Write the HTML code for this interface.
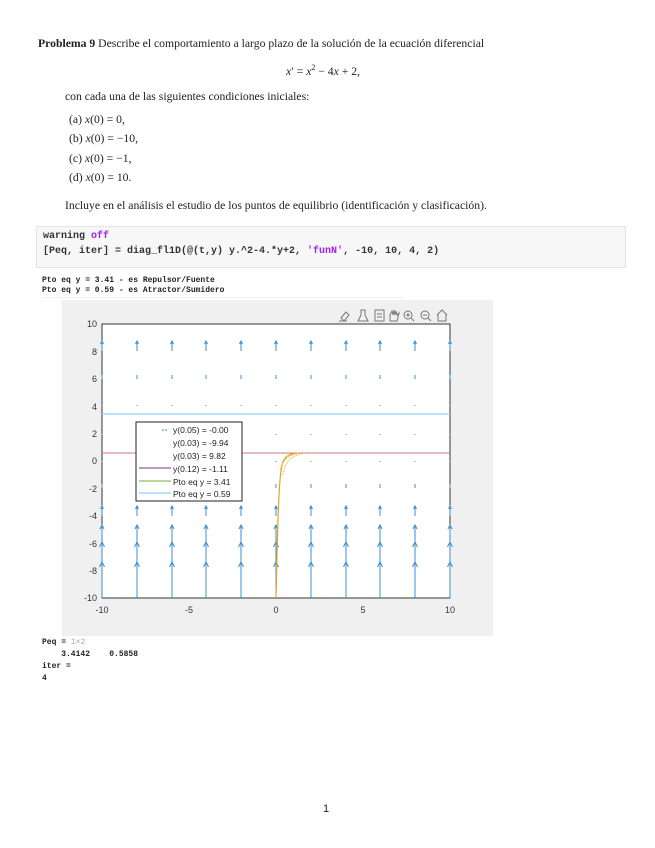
<!DOCTYPE html>
<html><head><meta charset="utf-8"><style>
body{margin:0;background:#fff;width:655px;height:848px;position:relative;font-family:"Liberation Serif",serif;color:#222;overflow:hidden}
.t{position:absolute;white-space:nowrap;font-size:11.7px}
.code{position:absolute;left:36px;top:226px;width:588px;height:40px;background:#f7f7f7;border:1px solid #e3e3e3}
.code div{position:absolute;left:6px;font-family:"Liberation Mono",monospace;font-size:10px;font-weight:bold;color:#333}
.o{position:absolute;font-family:"Liberation Mono",monospace;font-size:8px;font-weight:bold;color:#222;white-space:pre}
</style></head><body>
<div class="t" style="left:38px;top:37px"><b>Problema 9</b> Describe el comportamiento a largo plazo de la solución de la ecuación diferencial</div>
<div class="t" style="left:286px;top:63px"><i>x</i>′ = <i>x</i><sup style="font-size:8px">2</sup> − 4<i>x</i> + 2,</div>
<div class="t" style="left:65px;top:90px">con cada una de las siguientes condiciones iniciales:</div>
<div class="t" style="left:69px;top:113px">(a) <i>x</i>(0) = 0,</div>
<div class="t" style="left:69px;top:132px">(b) <i>x</i>(0) = −10,</div>
<div class="t" style="left:69px;top:152px">(c) <i>x</i>(0) = −1,</div>
<div class="t" style="left:69px;top:171px">(d) <i>x</i>(0) = 10.</div>
<div class="t" style="left:65px;top:199px">Incluye en el análisis el estudio de los puntos de equilibrio (identificación y clasificación).</div>
<div class="code">
<div style="top:4px">warning <span style="color:#a020f0">off</span></div>
<div style="top:19px">[Peq, iter] = diag_fl1D(@(t,y) y.^2-4.*y+2, <span style="color:#a020f0">'funN'</span>, -10, 10, 4, 2)</div>
</div>
<div class="o" style="left:42px;top:276px">Pto eq y = 3.41 - es Repulsor/Fuente</div>
<div class="o" style="left:42px;top:286px">Pto eq y = 0.59 - es Atractor/Sumidero</div>
<div style="position:absolute;left:42px;top:297px;width:362px;height:1px;background:#eee"></div>
<svg style="position:absolute;left:0;top:0" width="655" height="848">
<rect x="62" y="300" width="431" height="336" fill="#f0f0f0"/>
<rect x="102" y="324" width="348" height="274" fill="#fff" stroke="#333" stroke-width="1"/>
<defs>
<g id="col" stroke="#3a8fd0" stroke-width="1" fill="none">
<path d="M0 351V341M-1.5 344L0 341L1.5 344"/>
<path d="M0 379V375"/>
<path d="M0 406V405"/>
<path d="M0 434V435"/>
<path d="M0 461V462"/>
<path d="M0 488V484"/>
<path d="M0 516V506M-1.5 509L0 506L1.5 509"/>
<path d="M0 543V525M-2 529L0 525L2 529"/>
<path d="M0 571V542M-2.5 547L0 542L2.5 547"/>
<path d="M0 598V562M-2.5 567L0 562L2.5 567"/>
</g>
</defs>
<use href="#col" x="102"/><use href="#col" x="137"/><use href="#col" x="172"/><use href="#col" x="206"/><use href="#col" x="241"/><use href="#col" x="276"/><use href="#col" x="311"/><use href="#col" x="346"/><use href="#col" x="380"/><use href="#col" x="415"/><use href="#col" x="450"/>
<line x1="102" y1="414" x2="450" y2="414" stroke="#9fdcf5" stroke-width="1.5"/>
<line x1="102" y1="453" x2="450" y2="453" stroke="#c77" stroke-width="1"/>
<path d="M276 598C277 560 278 480 282 465C284 456 290 453 300 453" stroke="#e8a020" fill="none" stroke-width="1.2"/>
<path d="M280 470C283 460 288 455 300 453M283 475C285 462 290 456 305 453" stroke="#e8c060" fill="none" stroke-width="1" stroke-dasharray="2 1"/>
<rect x="136" y="422" width="106" height="79" fill="#fff" stroke="#222"/>
<g font-family="Liberation Sans,sans-serif" font-size="8.5" fill="#222">
<text x="173" y="433">y(0.05) = -0.00</text>
<text x="173" y="446">y(0.03) = -9.94</text>
<text x="173" y="459">y(0.03) = 9.82</text>
<text x="173" y="472">y(0.12) = -1.11</text>
<text x="173" y="485">Pto eq y = 3.41</text>
<text x="173" y="497">Pto eq y = 0.59</text>
</g>
<path d="M162 430h6" stroke="#3a8fd0" stroke-dasharray="2 1"/>
<line x1="139" y1="468" x2="171" y2="468" stroke="#7e2f8e"/>
<line x1="139" y1="481" x2="171" y2="481" stroke="#77ac30"/>
<line x1="139" y1="493" x2="171" y2="493" stroke="#9fdcf5" stroke-width="1.5"/>
<g font-family="Liberation Sans,sans-serif" font-size="9" fill="#333" text-anchor="end">
<text x="97" y="327">10</text><text x="97" y="355">8</text><text x="97" y="382">6</text><text x="97" y="410">4</text><text x="97" y="437">2</text><text x="97" y="464">0</text><text x="97" y="492">-2</text><text x="97" y="519">-4</text><text x="97" y="547">-6</text><text x="97" y="574">-8</text><text x="97" y="601">-10</text>
</g>
<g font-family="Liberation Sans,sans-serif" font-size="9" fill="#333" text-anchor="middle">
<text x="102" y="613">-10</text><text x="189" y="613">-5</text><text x="276" y="613">0</text><text x="363" y="613">5</text><text x="450" y="613">10</text>
</g>
<g stroke="#777" fill="none" stroke-width="1">
<path d="M341 318l5-6 3 3-5 6zM339 321h8"/>
<path d="M361 310h4v5l3 6h-10l3-6z"/>
<rect x="375" y="310" width="9" height="11"/><path d="M377 314h5M377 317h5"/>
<path d="M390 321v-6l2-4 1 4 1-5 1 5 1-4 1 4 2-2-2 8z"/>
<circle cx="408" cy="315" r="4"/><path d="M411 318l3 3M406 315h4M408 313v4"/>
<circle cx="425" cy="315" r="4"/><path d="M428 318l3 3M423 315h4"/>
<path d="M437 315l5-5 5 5M438 314v7h8v-7"/>
</g>
</svg>
<div class="o" style="left:42px;top:638px">Peq = <span style="color:#aaa;font-weight:normal">1×2</span></div>
<div class="o" style="left:42px;top:650px">    3.4142    0.5858</div>
<div class="o" style="left:42px;top:662px">iter =</div>
<div class="o" style="left:42px;top:674px">4</div>
<div class="t" style="left:323px;top:803px;font-family:'Liberation Sans',sans-serif;font-size:11px">1</div>
</body></html>
